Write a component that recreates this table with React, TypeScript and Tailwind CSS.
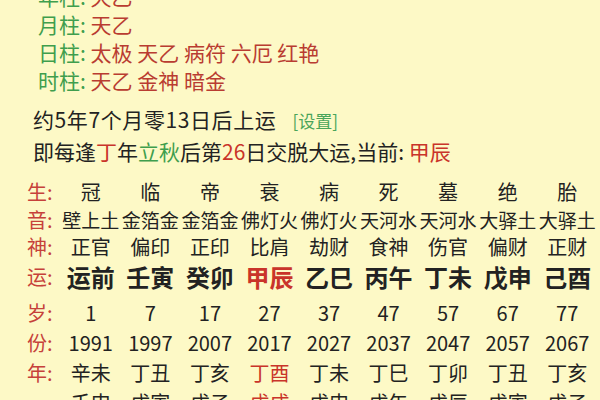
const font = "font-['Noto_Sans_CJK_SC','Noto_Sans',sans-serif]";

const pillars = [
  { label: '年柱', value: '天乙' },
  { label: '月柱', value: '天乙' },
  { label: '日柱', value: '太极 天乙 病符 六厄 红艳' },
  { label: '时柱', value: '天乙 金神 暗金' },
];

const sheng = ['冠', '临', '帝', '衰', '病', '死', '墓', '绝', '胎'];
const yin = ['壁上土', '金箔金', '金箔金', '佛灯火', '佛灯火', '天河水', '天河水', '大驿土', '大驿土'];
const shen = ['正官', '偏印', '正印', '比肩', '劫财', '食神', '伤官', '偏财', '正财'];
const yun = ['运前', '壬寅', '癸卯', '甲辰', '乙巳', '丙午', '丁未', '戊申', '己酉'];
const sui = ['1', '7', '17', '27', '37', '47', '57', '67', '77'];
const fen = ['1991', '1997', '2007', '2017', '2027', '2037', '2047', '2057', '2067'];
const nian = ['辛未', '丁丑', '丁亥', '丁酉', '丁未', '丁巳', '丁卯', '丁丑', '丁亥'];
const nian2 = ['壬申', '戊寅', '戊子', '戊戌', '戊申', '戊午', '戊辰', '戊寅', '戊子'];

// column of the current luck period
const CURRENT = 3;

function Row({
  label,
  items,
  h,
  cell,
  mark = false,
  extra = '',
}: {
  label?: string;
  items: string[];
  h: string;
  cell: string;
  mark?: boolean;
  extra?: string;
}) {
  return (
    <div className={`grid grid-cols-[34px_repeat(9,minmax(0,1fr))] pl-[27px] pr-[3px] items-center ${h} ${extra}`}>
      <div className="text-[20px] text-[#c6413a] whitespace-nowrap">{label ? `${label}:` : ''}</div>
      {items.map((t, i) => (
        <div
          key={i}
          className={`text-center whitespace-nowrap ${cell} ${mark && i === CURRENT ? 'text-[#c9342a]' : 'text-[#222]'}`}
        >
          {t}
        </div>
      ))}
    </div>
  );
}

export default function App() {
  return (
    <div className={`w-[600px] h-[400px] overflow-hidden bg-[#fdf9c6] ${font}`}>
      <div className="-mt-[18px] pl-[38px] text-[21px] leading-[28px]">
        {pillars.map((p) => (
          <div key={p.label} className="whitespace-nowrap">
            <span className="text-[#3f9e4d]">{p.label}: </span>
            <span className="text-[#b93c31]">{p.value}</span>
          </div>
        ))}
      </div>

      <div className="mt-[10px] pl-[33px] text-[21px] leading-[30px] text-[#222]">
        <div className="flex items-baseline whitespace-nowrap">
          <span className="tracking-[0.6px]">约5年7个月零13日后上运</span>
          <span className="ml-4 text-[17px] text-[#4aa55a]">[设置]</span>
        </div>
        <div className="whitespace-nowrap">
          即每逢<span className="text-[#c9342a]">丁</span>年
          <span className="text-[#3f9e4d]">立秋</span>后第
          <span className="text-[#c9342a]">26</span>日交脱大运,当前:{' '}
          <span className="text-[#c9342a]">甲辰</span>
        </div>
      </div>

      <div className="mt-[12px] leading-none">
        <Row label="生" items={sheng} h="h-[28px]" cell="text-[20px]" />
        <Row label="音" items={yin} h="h-[27px]" cell="text-[19px]" />
        <Row label="神" items={shen} h="h-[28px]" cell="text-[20px]" />
        <Row label="运" items={yun} h="h-[32px]" cell="text-[24px] font-bold" mark extra="mb-[5px]" />
        <Row label="岁" items={sui} h="h-[30px]" cell="text-[20px]" />
        <Row label="份" items={fen} h="h-[30px]" cell="text-[20px]" />
        <Row label="年" items={nian} h="h-[30px]" cell="text-[20px]" mark />
        <Row items={nian2} h="h-[30px]" cell="text-[20px]" mark />
      </div>
    </div>
  );
}
